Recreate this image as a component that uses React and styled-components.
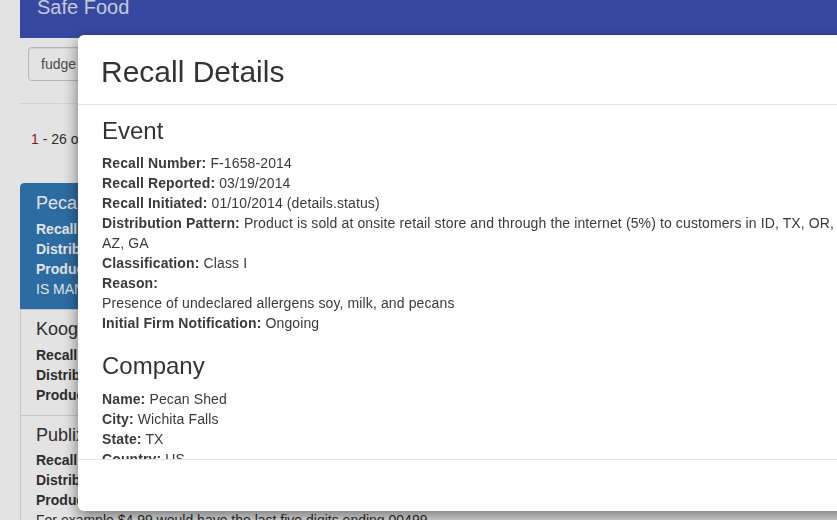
import React from "react";
import styled, { createGlobalStyle } from "styled-components";

const GlobalStyle = createGlobalStyle`
  html, body {
    margin: 0;
    padding: 0;
    overflow: hidden;
    background: #fff;
  }
  body {
    font-family: "Liberation Sans", Arial, sans-serif;
    font-size: 14px;
    line-height: 20px;
    color: #333;
  }
  * {
    box-sizing: border-box;
  }
`;

// Page behind the modal
const Page = styled.div`
  padding-left: 20px;
  width: 837px;
  height: 520px;
  overflow: hidden;
`;

const TopBar = styled.header`
  height: 38px;
  width: 960px;
  background: #3f51b5;
  padding: 0 17px;
  overflow: hidden;
`;

const Brand = styled.div`
  font-size: 20px;
  line-height: 20px;
  margin-top: -3px;
  color: #dde2f6;
`;

const SearchRow = styled.div`
  padding: 9px 0 0 8px;
`;

const SearchInput = styled.input`
  display: block;
  width: 400px;
  height: 34px;
  padding: 6px 12px;
  font-family: inherit;
  font-size: 14px;
  color: #555;
  background: #fff;
  border: 1px solid #ccc;
  border-radius: 4px;
  box-shadow: inset 0 1px 1px rgba(0, 0, 0, 0.075);
`;

const Divider = styled.hr`
  margin: 22px 0 0;
  width: 960px;
  border: 0;
  border-top: 1px solid #eee;
`;

const Summary = styled.p`
  margin: 25px 0 0;
  padding-left: 11px;
  line-height: 20px;
`;

const Count = styled.span`
  color: #a3191b;
`;

const ResultList = styled.div`
  margin-top: 34px;
  width: 960px;
`;

const ResultItem = styled.div`
  padding: 10px 15px;
  margin-bottom: -1px;
  border: 1px solid ${(p) => (p.$active ? "#337ab7" : "#ddd")};
  background: ${(p) => (p.$active ? "#337ab7" : "#fff")};
  color: ${(p) => (p.$active ? "#fff" : "#333")};
  &:first-child {
    border-top-left-radius: 4px;
    border-top-right-radius: 4px;
  }
`;

const ItemHeading = styled.h4`
  margin: 0 0 5px;
  font-size: 18px;
  font-weight: 500;
  line-height: 19.8px;
`;

const ItemLine = styled.div`
  white-space: nowrap;
  overflow: hidden;
  line-height: 20px;
`;

const Label = styled.b`
  font-weight: 700;
`;

// Modal
const Backdrop = styled.div`
  position: fixed;
  inset: 0;
  background: rgba(0, 0, 0, 0.11);
`;

const Modal = styled.div`
  position: fixed;
  top: 35px;
  left: 78px;
  width: 790px;
  height: 476px;
  display: flex;
  flex-direction: column;
  background: #fff;
  border-radius: 6px;
  box-shadow: 0 5px 15px rgba(0, 0, 0, 0.5);
  overflow: hidden;
`;

const ModalHeader = styled.div`
  padding: 20px 23px 16px;
  border-bottom: 1px solid #e5e5e5;
`;

const ModalTitle = styled.h4`
  margin: 0;
  font-size: 30px;
  line-height: 33px;
  font-weight: 500;
  color: #333;
`;

const ModalBody = styled.div`
  flex: 1;
  overflow: hidden;
  padding: 13px 24px;
  color: #3a3a3a;
`;

const SectionTitle = styled.h3`
  margin: ${(p) => (p.$first ? "0" : "20px")} 0 9px;
  font-size: 24px;
  line-height: 26.4px;
  font-weight: 500;
  color: #333;
`;

const Field = styled.div`
  line-height: 20px;
  letter-spacing: 0.12px;
`;

const ModalFooter = styled.div`
  height: 52px;
  flex-shrink: 0;
  border-top: 1px solid #e5e5e5;
`;

const results = [
  {
    title: "Pecan Shed",
    active: true,
    lines: [
      ["Recall Number:", " F-1658-2014"],
      ["Distribution Pattern:", " Product is sold at onsite retail store and through the internet"],
      ["Product Description:", " Chocolate Fudge with Pecans, 1/2 lb. box. THIS PRODUCT"],
      [null, "IS MANUFACTURED IN A FACILITY THAT PROCESSES TREE NUTS"],
    ],
  },
  {
    title: "Koogle Candies",
    lines: [
      ["Recall Number:", " F-1432-2014"],
      ["Distribution Pattern:", " Nationwide"],
      ["Product Description:", " Peanut Butter Fudge, 8 oz. tubs"],
    ],
  },
  {
    title: "Publix Super Markets",
    lines: [
      ["Recall Number:", " F-0987-2014"],
      ["Distribution Pattern:", " FL, GA, AL, SC, TN"],
      ["Product Description:", " Publix Bakery Fudge, sold by weight. UPC begins with 2 and ends with price;"],
      [null, "For example $4.99 would have the last five digits ending 00499."],
    ],
  },
];

const eventFields = [
  ["Recall Number:", "F-1658-2014"],
  ["Recall Reported:", "03/19/2014"],
  ["Recall Initiated:", "01/10/2014 (details.status)"],
  [
    "Distribution Pattern:",
    "Product is sold at onsite retail store and through the internet (5%) to customers in ID, TX, OR, AZ, GA",
  ],
  ["Classification:", "Class I"],
  ["Reason:", null],
  [null, "Presence of undeclared allergens soy, milk, and pecans"],
  ["Initial Firm Notification:", "Ongoing"],
];

const companyFields = [
  ["Name:", "Pecan Shed"],
  ["City:", "Wichita Falls"],
  ["State:", "TX"],
  ["Country:", "US"],
];

const renderField = ([label, value], index) => (
  <Field key={index}>
    {label && <Label>{label}</Label>}
    {label && value ? " " : ""}
    {value}
  </Field>
);

const App = () => {
  return (
    <>
      <GlobalStyle />
      <Page>
        <TopBar>
          <Brand>Safe Food</Brand>
        </TopBar>
        <SearchRow>
          <SearchInput value="fudge" readOnly />
        </SearchRow>
        <Divider />
        <Summary>
          <Count>1</Count> - 26 of 26 recalls
        </Summary>
        <ResultList>
          {results.map((item) => (
            <ResultItem key={item.title} $active={item.active}>
              <ItemHeading>{item.title}</ItemHeading>
              {item.lines.map(([label, value], i) => (
                <ItemLine key={i}>
                  {label && <Label>{label}</Label>}
                  {value}
                </ItemLine>
              ))}
            </ResultItem>
          ))}
        </ResultList>
      </Page>
      <Backdrop />
      <Modal>
        <ModalHeader>
          <ModalTitle>Recall Details</ModalTitle>
        </ModalHeader>
        <ModalBody>
          <SectionTitle $first>Event</SectionTitle>
          {eventFields.map(renderField)}
          <SectionTitle>Company</SectionTitle>
          {companyFields.map(renderField)}
        </ModalBody>
        <ModalFooter />
      </Modal>
    </>
  );
};

export default App;
